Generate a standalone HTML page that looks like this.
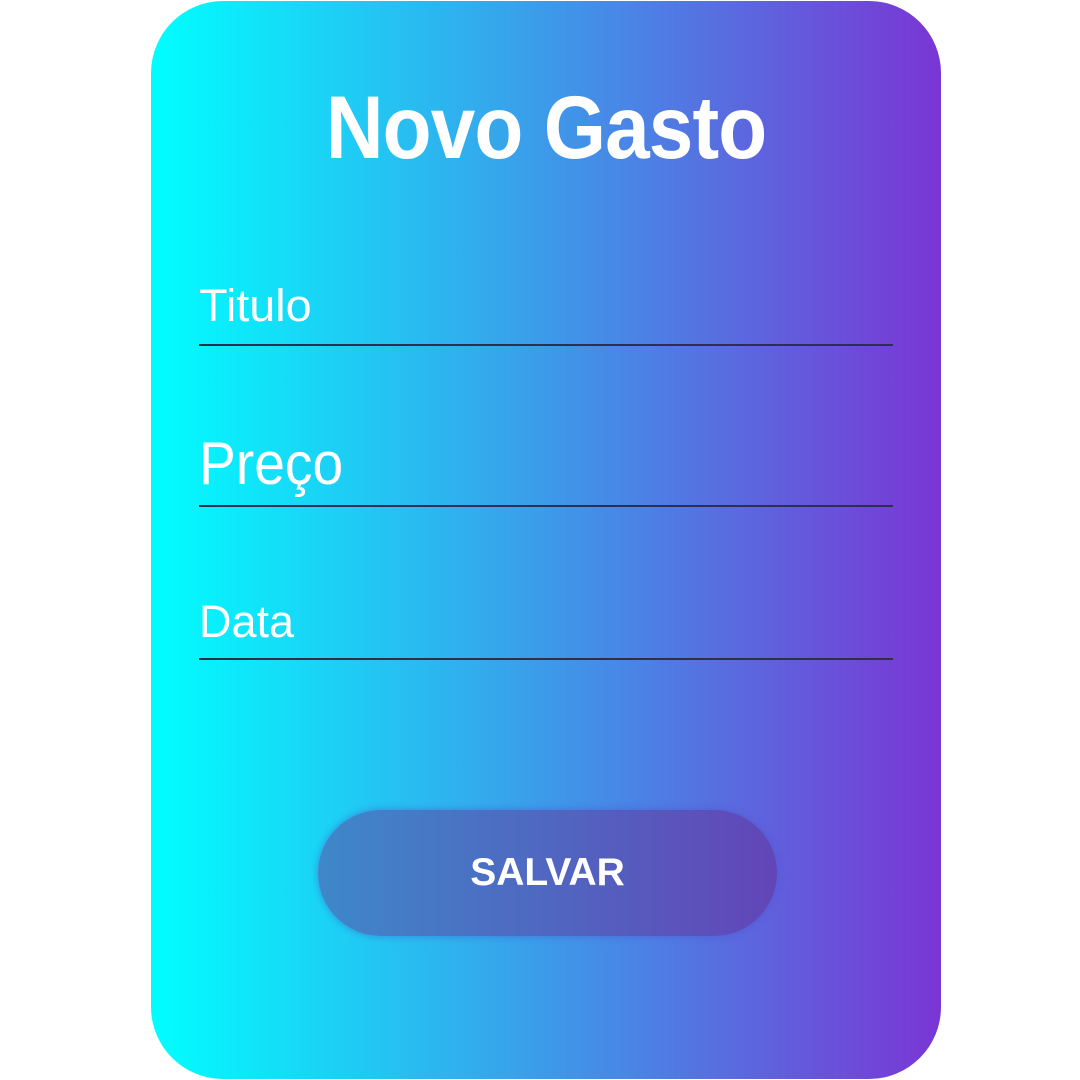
<!DOCTYPE html>
<html><head><style>
html,body{margin:0;padding:0;width:1080px;height:1080px;background:#fff;overflow:hidden}
.card{position:absolute;left:151px;top:1px;width:790px;height:1078px;border-radius:72px;background:linear-gradient(to right,#00ffff,#7a35d4);font-family:"Liberation Sans",sans-serif;color:#fff}
.t{position:absolute;left:0;width:790px;text-align:center;top:76px;font-size:89px;font-weight:bold;letter-spacing:-1px;line-height:100px;transform:scaleX(0.9)}
.l{position:absolute;left:48px;white-space:nowrap;line-height:1;transform-origin:left center}
.line{position:absolute;left:48px;width:694px;height:2px;background:#2e2f4a}
.btn{position:absolute;left:167px;top:809px;width:459px;height:126px;border-radius:63px;background:linear-gradient(to right,#3e88c9,#6245b8);box-shadow:0 0 6px 2px rgba(80,80,200,.35);text-align:center;line-height:126px;font-size:39px;font-weight:bold}
</style></head><body>
<div class="card">
<div class="t">Novo Gasto</div>
<div class="l" style="top:282px;font-size:45px;transform:scaleX(1.04)">Titulo</div>
<div class="line" style="top:343px"></div>
<div class="l" style="top:433px;font-size:60px;transform:scaleX(0.92)">Preço</div>
<div class="line" style="top:504px"></div>
<div class="l" style="top:598px;font-size:45px">Data</div>
<div class="line" style="top:657px"></div>
<div class="btn">SALVAR</div>
</div>
</body></html>
